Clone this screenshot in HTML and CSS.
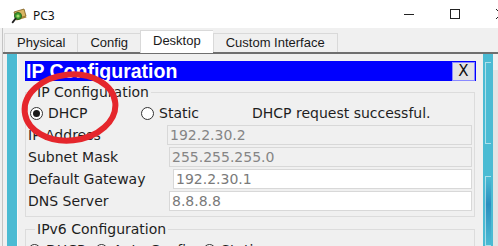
FILE: index.html
```html
<!DOCTYPE html>
<html lang="en">
<head>
    <meta charset="UTF-8">
    <title>PC3</title>
    <link rel="stylesheet" href="styles.css">
</head>
<body>
<div class="titlebar">
    <svg class="app-icon" width="17" height="17" viewBox="0 0 17 17">
        <path d="M3 5 L13 2 L15 9 L5 12 Z" fill="#d9b562" stroke="#7a5a1c" stroke-width="0.8"/>
        <path d="M5 12 L15 9 L15.5 10.5 L5.5 13.5 Z" fill="#a88536"/>
        <circle cx="7" cy="9" r="3.6" fill="#3c9a2f" stroke="#1f5c18" stroke-width="0.8"/>
        <circle cx="7" cy="9" r="1.6" fill="#a5d86a"/>
        <path d="M4.6 11.6 L1.6 15.4" stroke="#222" stroke-width="1.8" stroke-linecap="round"/>
    </svg>
    <span class="title">PC3</span>
    <div class="controls">
        <span class="ctrl">
            <svg width="10" height="10" viewBox="0 0 10 10"><path d="M0 5.5 H10" stroke="#222" stroke-width="1"/></svg>
        </span>
        <span class="ctrl">
            <svg width="10" height="10" viewBox="0 0 10 10"><rect x="0.5" y="0.5" width="9" height="9" fill="none" stroke="#222" stroke-width="1"/></svg>
        </span>
        <span class="ctrl">
            <svg width="10" height="10" viewBox="0 0 10 10"><path d="M0 0 L10 10 M10 0 L0 10" stroke="#222" stroke-width="1"/></svg>
        </span>
    </div>
</div>

<div class="window">
    <div class="tabs">
        <div class="tab">Physical</div>
        <div class="tab">Config</div>
        <div class="tab active">Desktop</div>
        <div class="tab">Custom Interface</div>
    </div>

    <div class="content">
        <div class="teal teal-left"></div>

        <div class="panel">
            <div class="app-bar">
                <span class="app-title">IP Configuration</span>
                <span class="close-btn">X</span>
            </div>

            <fieldset class="group">
                <legend>IP Configuration</legend>
                <div class="modes">
                    <span class="option"><span class="radio checked"></span>DHCP</span>
                    <span class="option option-wide"><span class="radio"></span>Static</span>
                    <span class="status">DHCP request successful.</span>
                </div>
                <div class="field">
                    <span class="label">IP Address</span>
                    <input class="value" type="text" value="192.2.30.2" disabled>
                </div>
                <div class="field field-mask">
                    <span class="label">Subnet Mask</span>
                    <input class="value" type="text" value="255.255.255.0" disabled>
                </div>
                <div class="field field-gateway">
                    <span class="label">Default Gateway</span>
                    <input class="value live" type="text" value="192.2.30.1" readonly>
                </div>
                <div class="field field-dns">
                    <span class="label">DNS Server</span>
                    <input class="value live" type="text" value="8.8.8.8" readonly>
                </div>
            </fieldset>

            <fieldset class="group group-v6">
                <legend>IPv6 Configuration</legend>
                <div class="modes">
                    <span class="option option-v6"><span class="radio"></span>DHCP</span>
                    <span class="option option-v6b"><span class="radio"></span>Auto Config</span>
                    <span class="option"><span class="radio checked"></span>Static</span>
                </div>
            </fieldset>
        </div>

        <div class="teal teal-right">
            <div class="deco deco-top"></div>
            <div class="deco deco-bottom"></div>
        </div>
        <div class="scroll-strip"></div>
    </div>
</div>

<!-- red annotation drawn over the dialog -->
<svg class="annotation" width="498" height="246" viewBox="0 0 498 246">
    <ellipse cx="70" cy="107.5" rx="45.5" ry="33" fill="none" stroke="#e5262c" stroke-width="6" transform="rotate(-6 70 107.5)"/>
</svg>
</body>
</html>
```

FILE: styles.css
```css
:root {
    --chrome: #f0f0f0;
    --tab-border: #d9d9d9;
    --teal: #4bbbd3;
    --app-blue: #0000ff;
    --group-line: #dcdcdc;
    --ink: #1e1e1e;
    --muted: #858585;
}

body {
    margin: 0;
    width: 498px;
    height: 246px;
    overflow: hidden;
    position: relative;
    background: var(--chrome);
    font-family: "DejaVu Sans", sans-serif;
    color: var(--ink);
}

/* Window title bar */
.titlebar {
    height: 28px;
    background: #fff;
    display: flex;
    align-items: center;
}

.app-icon {
    margin-left: 11px;
    margin-top: 2px;
}

.title {
    margin-left: 5px;
    font-family: "Noto Sans", sans-serif;
    font-size: 12px;
    color: #111;
    margin-top: 3px;
}

.controls {
    margin-left: auto;
    display: flex;
    width: 125px;
    flex-shrink: 0;
    margin-right: -13px;
}

.ctrl {
    width: 46px;
    height: 28px;
    display: flex;
    align-items: center;
    justify-content: center;
    flex-shrink: 0;
}

/* Window body */
.window {
    margin-left: 2px;
    border-left: 1px solid #c4c4c4;
}

.tabs {
    height: 24px;
    display: flex;
    align-items: flex-end;
    padding-left: 1px;
    border-bottom: 2px solid #6f6f6f;
    font-family: "Liberation Sans", sans-serif;
    font-size: 13px;
}

.tab {
    height: 18px;
    line-height: 18px;
    padding: 0 12px;
    border: 1px solid var(--tab-border);
    border-bottom: none;
    border-right: none;
    color: #1a1a1a;
}

.tab:last-child {
    border-right: 1px solid var(--tab-border);
}

.tab.active {
    height: 22px;
    line-height: 20px;
    background: #fff;
    margin-bottom: -1px;
}

.content {
    display: flex;
    height: 192px;
    padding-left: 4px;
}

.teal {
    background: var(--teal);
    flex-shrink: 0;
}

.teal-left {
    width: 10px;
}

.teal-right {
    width: 10px;
    display: flex;
    flex-direction: column;
    padding-top: 8px;
    box-sizing: border-box;
}

.deco {
    margin-left: 2px;
    width: 5px;
    border: 1px solid rgba(255, 255, 255, 0.55);
    border-right: none;
}

.deco-top {
    height: 80px;
}

.deco-bottom {
    margin-top: 32px;
    flex: 1;
    background: linear-gradient(#4bbbd3, #2a8fbf 40%, #4bbbd3);
}

.scroll-strip {
    width: 5px;
    margin-top: 16px;
    background: #e4e4e4;
}

/* Desktop application panel */
.panel {
    width: 466px;
    flex-shrink: 0;
    box-sizing: border-box;
    border-left: 1px solid #fafafa;
    padding: 7px 7px 0 7px;
    background: var(--chrome);
    font-size: 14px;
}

.app-bar {
    height: 20px;
    background: var(--app-blue);
    display: flex;
    align-items: center;
}

.app-title {
    font-family: "Liberation Sans", sans-serif;
    font-weight: bold;
    font-size: 19.5px;
    color: #fff;
    padding-left: 1px;
}

.close-btn {
    margin-left: auto;
    margin-right: 1px;
    width: 21px;
    height: 17px;
    line-height: 17px;
    text-align: center;
    background: #e3e3e3;
    border: 1px solid #8a8aff;
    font-size: 15px;
    color: #111;
}

.group {
    margin: 3px 1px 0 0;
    padding: 0 2px 5px 2px;
    border: 1px solid var(--group-line);
    min-width: 0;
}

.group legend {
    margin-left: 7px;
    padding: 0 2px;
    line-height: 16px;
}

.modes {
    height: 20px;
    display: flex;
    align-items: center;
    margin-top: 3px;
    margin-bottom: 2px;
}

.option {
    display: flex;
    align-items: center;
    gap: 5px;
    width: 109px;
    margin-left: 2px;
}

.option-wide {
    width: 111px;
}

.radio {
    width: 11px;
    height: 11px;
    border: 1px solid #333;
    border-radius: 50%;
    background: #fff;
    display: flex;
    align-items: center;
    justify-content: center;
}

.radio.checked::after {
    content: '';
    width: 7px;
    height: 7px;
    border-radius: 50%;
    background: #1a1a1a;
}

.field {
    display: flex;
    align-items: center;
    height: 20px;
    margin-top: 2px;
}

.label {
    width: 139px;
    flex-shrink: 0;
}

.field-mask .label,
.field-dns .label {
    width: 141px;
}

.field-gateway .label {
    width: 145px;
}

.value {
    flex: 1;
    min-width: 0;
    height: 20px;
    box-sizing: border-box;
    margin: 0;
    padding: 0 2px;
    border: 1px solid #d8d8d8;
    background: var(--chrome);
    font-family: "DejaVu Sans", sans-serif;
    font-size: 14px;
    color: var(--muted);
    outline: none;
}

.value.live {
    background: #fff;
    color: #7a7a7a;
}

.group-v6 {
    margin-top: 4px;
    padding-bottom: 0;
}

.group-v6 .modes {
    margin-top: 3px;
}

.option-v6 {
    width: 65px;
    margin-left: 0;
}

.option-v6b {
    width: 106px;
}

/* Annotation */
.annotation {
    position: absolute;
    left: 0;
    top: 0;
    pointer-events: none;
}
```
